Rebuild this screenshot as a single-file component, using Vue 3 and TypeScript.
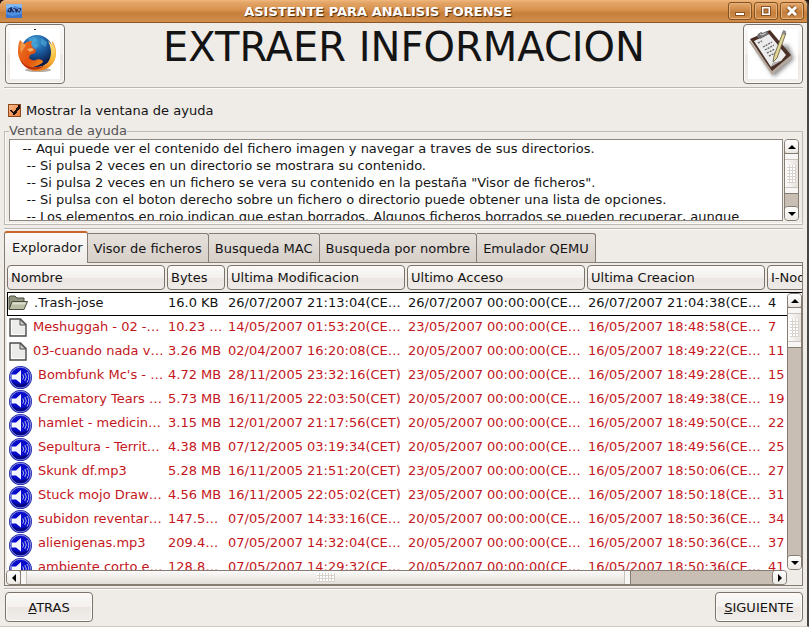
<script setup lang="ts">
import { ref } from 'vue'

type Kind = 'folder' | 'file' | 'audio'
interface Entry {
  kind: Kind
  name: string
  bytes: string
  modified: string
  accessed: string
  created: string
  inode: string
}

const showHelp = ref(true)
const activeTab = ref(0)
const selected = ref(0)

const tabs: string[] = [
  'Explorador',
  'Visor de ficheros',
  'Busqueda MAC',
  'Busqueda por nombre',
  'Emulador QEMU',
]

const columns: string[] = [
  'Nombre',
  'Bytes',
  'Ultima Modificacion',
  'Ultimo Acceso',
  'Ultima Creacion',
  'I-Nodo',
]

const helpText = [
  '   -- Aqui puede ver el contenido del fichero imagen y navegar a traves de sus directorios.',
  '    -- Si pulsa 2 veces en un directorio se mostrara su contenido.',
  '    -- Si pulsa 2 veces en un fichero se vera su contenido en la pestaña "Visor de ficheros".',
  '    -- Si pulsa con el boton derecho sobre un fichero o directorio puede obtener una lista de opciones.',
  '    -- Los elementos en rojo indican que estan borrados. Algunos ficheros borrados se pueden recuperar, aunque',
].join('\n')

function entry(kind: Kind, name: string, bytes: string, modified: string, accessed: string, created: string, inode: string): Entry {
  return { kind, name, bytes, modified, accessed, created, inode }
}

const entries: Entry[] = [
  entry('folder', '.Trash-jose', '16.0 KB', '26/07/2007 21:13:04(CE…', '26/07/2007 00:00:00(CE…', '26/07/2007 21:04:38(CE…', '4'),
  entry('file', 'Meshuggah - 02 -…', '10.23 …', '14/05/2007 01:53:20(CE…', '23/05/2007 00:00:00(CE…', '16/05/2007 18:48:58(CE…', '7'),
  entry('file', '03-cuando nada v…', '3.26 MB', '02/04/2007 16:20:08(CE…', '20/05/2007 00:00:00(CE…', '16/05/2007 18:49:22(CE…', '11'),
  entry('audio', "Bombfunk Mc's - …", '4.72 MB', '28/11/2005 23:32:16(CET)', '23/05/2007 00:00:00(CE…', '16/05/2007 18:49:28(CE…', '15'),
  entry('audio', 'Crematory Tears …', '5.73 MB', '16/11/2005 22:03:50(CET)', '20/05/2007 00:00:00(CE…', '16/05/2007 18:49:38(CE…', '19'),
  entry('audio', 'hamlet - medicin…', '3.15 MB', '12/01/2007 21:17:56(CET)', '20/05/2007 00:00:00(CE…', '16/05/2007 18:49:50(CE…', '22'),
  entry('audio', 'Sepultura - Territ…', '4.38 MB', '07/12/2005 03:19:34(CET)', '20/05/2007 00:00:00(CE…', '16/05/2007 18:49:56(CE…', '25'),
  entry('audio', 'Skunk df.mp3', '5.28 MB', '16/11/2005 21:51:20(CET)', '23/05/2007 00:00:00(CE…', '16/05/2007 18:50:06(CE…', '27'),
  entry('audio', 'Stuck mojo Draw…', '4.56 MB', '16/11/2005 22:05:02(CET)', '23/05/2007 00:00:00(CE…', '16/05/2007 18:50:18(CE…', '31'),
  entry('audio', 'subidon reventar…', '147.5…', '07/05/2007 14:33:16(CE…', '20/05/2007 00:00:00(CE…', '16/05/2007 18:50:36(CE…', '34'),
  entry('audio', 'alienigenas.mp3', '209.4…', '07/05/2007 14:32:04(CE…', '20/05/2007 00:00:00(CE…', '16/05/2007 18:50:36(CE…', '37'),
  entry('audio', 'ambiente corto e…', '128.8…', '07/05/2007 14:29:32(CE…', '20/05/2007 00:00:00(CE…', '16/05/2007 18:50:36(CE…', '41'),
]
</script>

<template>
  <div class="window">
    <header class="titlebar">
      <svg class="app-icon" viewBox="0 0 16 14" aria-hidden="true">
        <rect width="16" height="14" fill="#4f8fe0" />
        <path d="M0 0h16v4L9 2 0 5z" fill="#86b8f0" />
        <path d="M0 10l6 2 10-2v4H0z" fill="#3a74cc" />
        <path d="M1 8l2-4 3-1v3l2-2 3 1 4-1v2l-2 3-1-2-2 2-1-3-2 3-1-2-2 2-1-1z" fill="#1c2f66" />
        <path d="M7 6h2M12 6h2M3 6h1" stroke="#c9def8" />
      </svg>
      <span class="window-title">ASISTENTE PARA ANALISIS FORENSE</span>
      <div class="window-buttons">
        <button type="button" aria-label="Minimizar">
          <svg viewBox="0 0 12 12"><rect x="1" y="7" width="10" height="4" fill="#8a5220" /><rect x="2" y="8" width="8" height="2" fill="#fff" /></svg>
        </button>
        <button type="button" aria-label="Maximizar">
          <svg viewBox="0 0 12 12"><rect x="1" y="1" width="10" height="10" fill="#8a5220" /><rect x="2" y="2" width="8" height="8" fill="#fff" /><rect x="4" y="4" width="4" height="4" fill="#c07c3c" stroke="#8a5220" /></svg>
        </button>
        <button type="button" aria-label="Cerrar">
          <svg viewBox="0 0 12 12"><path d="M2 2l8 8M10 2l-8 8" stroke="#8a5220" stroke-width="5" /><path d="M2 2l8 8M10 2l-8 8" stroke="#fff" stroke-width="3" /></svg>
        </button>
      </div>
    </header>

    <main class="content">
      <div class="banner">
        <button type="button" class="push picture" aria-label="Navegador">
          <svg viewBox="0 0 50 50" aria-hidden="true">
            <defs>
              <radialGradient id="globe" cx="45%" cy="20%" r="75%">
                <stop offset="0" stop-color="#3f9fd8" />
                <stop offset="0.5" stop-color="#1a5a9e" />
                <stop offset="1" stop-color="#0a1845" />
              </radialGradient>
              <linearGradient id="fox" x1="0" y1="0" x2="1" y2="0.5">
                <stop offset="0" stop-color="#ee7a28" />
                <stop offset="0.5" stop-color="#e2500e" />
                <stop offset="1" stop-color="#f5a522" />
              </linearGradient>
              <linearGradient id="tail" x1="0" y1="0" x2="0" y2="1">
                <stop offset="0" stop-color="#fbe58a" />
                <stop offset="0.6" stop-color="#f7bd3a" />
                <stop offset="1" stop-color="#e8701a" />
              </linearGradient>
            </defs>
            <rect width="50" height="50" fill="#fff" />
            <rect x="24" width="2" height="1" fill="#222" />
            <ellipse cx="28" cy="41" rx="13" ry="2" fill="#b5aca6" />
            <circle cx="27" cy="22" r="16" fill="url(#globe)" />
            <path d="M18 9l7-1 2 3-3 3 5 2-3 4-5-3zM31 9l6 4-1 5-5-3z" fill="#52aedb" opacity=".6" />
            <path d="M10 11l4 4c2-2 5-3 8-3l-1 3 2 4 3 2-1 3-5 2-1 3c3 3 6 3 9 1l4 1 1 2c-3 3-7 5-11 4 6 3 14 0 17-5 3-6 3-14-1-20l4 4v-4c4 5 5 12 3 18-3 8-10 12-18 12C17 42 9 34 8 24c0-5 0-9 2-13z" fill="url(#fox)" />
            <path d="M38 12l4 4v-3c5 8 5 16 0 22-4 5-10 7-15 6 9-3 14-9 14-17 0-5-1-8-3-12z" fill="url(#tail)" />
            <path d="M10 30c4 7 10 9 18 8 3 0 5-1 7-2-4 5-13 6-19 2-3-2-5-5-6-8z" fill="#b72e08" />
            <path d="M11 13l5 3-5 8c-1-4-1-8 0-11z" fill="#f59848" />
            <path d="M17 20l5-1 2 2-4 2z" fill="#f7b06a" />
          </svg>
        </button>
        <h1>EXTRAER INFORMACION</h1>
        <button type="button" class="push picture" aria-label="Informe">
          <svg viewBox="0 0 50 50" aria-hidden="true">
            <defs>
              <filter id="soft"><feGaussianBlur stdDeviation="2" /></filter>
            </defs>
            <rect width="50" height="50" fill="#fff" />
            <path d="M8 20l18 28 20-18-6-14z" fill="#8a8a8a" filter="url(#soft)" />
            <path d="M1 13l23 33 20-17v-3L24 41 2 11z" fill="#b5a89c" />
            <path d="M2 10L22 1l21 25-19 16z" fill="#4a3026" />
            <path d="M6 12l15-7 17 21-5 6-8 2-2 4z" fill="#ececec" />
            <path d="M23 38l2-4 8-2z" fill="#b8b8b8" />
            <path d="M10 5l3-2 2 1 4-2 2 3-9 5-3-2z" fill="#6f6f6f" />
            <path d="M12 5l2 1 4-2" fill="none" stroke="#ddd" />
            <path d="M10 14l4-2M15 18l9-5M17 21l9-5M19 24l8-4M21 27l6-3" fill="none" stroke="#6c6c6c" stroke-width="1.4" stroke-dasharray="2 1" />
            <path d="M35 3l3 1-9 25-4 4 1-6z" fill="#e3d896" stroke="#5f543a" stroke-width=".8" />
            <path d="M35 1l3 1-1 4-3-1z" fill="#8a8a86" />
          </svg>
        </button>
      </div>

      <hr />

      <label class="check">
        <input v-model="showHelp" type="checkbox" />
        <span>Mostrar la ventana de ayuda</span>
      </label>

      <fieldset v-show="showHelp" class="help">
        <legend>Ventana de ayuda</legend>
        <div class="help-body">
          <textarea readonly aria-label="Ventana de ayuda" :value="helpText"></textarea>
          <div class="scroll vertical">
            <button type="button" aria-label="Subir ayuda"><svg viewBox="0 0 8 8"><path d="M4 2l4 4H0z" /></svg></button>
            <div class="thumb short"><i class="grip"></i></div>
            <div class="trough"></div>
            <button type="button" aria-label="Bajar ayuda"><svg viewBox="0 0 8 8"><path d="M0 2h8L4 6z" /></svg></button>
          </div>
        </div>
      </fieldset>

      <hr />

      <div class="tabs" role="tablist">
        <button
          v-for="(tab, i) in tabs"
          :key="tab"
          type="button"
          role="tab"
          :aria-selected="activeTab === i"
          :class="{ active: activeTab === i }"
          @click="activeTab = i"
        >{{ tab }}</button>
      </div>

      <section class="explorer">
        <div class="listing">
          <table>
            <colgroup>
              <col class="c-name" /><col class="c-bytes" /><col class="c-date" /><col class="c-date" /><col class="c-date" /><col class="c-node" />
            </colgroup>
            <thead>
              <tr>
                <th v-for="column in columns" :key="column" scope="col"><span>{{ column }}</span></th>
              </tr>
            </thead>
            <tbody>
              <tr
                v-for="(row, i) in entries"
                :key="row.name"
                :class="{ deleted: row.kind !== 'folder', selected: selected === i }"
                @click="selected = i"
              >
                <td>
                  <div class="name" :class="row.kind">
                    <svg v-if="row.kind === 'folder'" viewBox="0 0 20 16" aria-hidden="true">
                      <path d="M1 14V2l1-1h5l2 2h7v4" fill="#8f937c" stroke="#4a4d3e" />
                      <path d="M1 14.500L4 6.500h15.500L16 14.500z" fill="#b9bda4" stroke="#4a4d3e" />
                      <path d="M4.700 7.500H18l-1 2H4z" fill="#dcdfcc" />
                    </svg>
                    <svg v-else-if="row.kind === 'file'" viewBox="0 0 18 19" aria-hidden="true">
                      <path d="M1 1h10.500L17 6.500V18H1z" fill="#ececea" stroke="#4c4c4a" stroke-width="1.400" />
                      <path d="M2.500 16.500V2.500M2.500 16.500h13" stroke="#fff" />
                      <path d="M11 1.500V7h5.500z" fill="#d4d4d0" stroke="#4c4c4a" />
                    </svg>
                    <svg v-else viewBox="0 0 23 23" aria-hidden="true">
                      <circle cx="11.500" cy="11.500" r="11.500" fill="#1a22a8" />
                      <circle cx="11.500" cy="11.500" r="10.300" fill="#0a0ccb" stroke="#a9b2ee" stroke-width=".8" />
                      <path d="M3 16a9.500 9.500 0 0 0 17 0q-8 4-17 0z" fill="#050788" />
                      <path d="M2.500 8.500H7l5-4.500v13.500l-5-4H2.500z" fill="#f4f6ff" />
                      <path d="M13.700 8.500q1.800 2.500 0 5M15.800 7q3 4 0 8M18 6q3.500 5 0 10.500" fill="none" stroke="#aab4f2" stroke-width="1" />
                    </svg>
                    <span>{{ row.name }}</span>
                  </div>
                </td>
                <td>{{ row.bytes }}</td>
                <td>{{ row.modified }}</td>
                <td>{{ row.accessed }}</td>
                <td>{{ row.created }}</td>
                <td>{{ row.inode }}</td>
              </tr>
            </tbody>
          </table>
        </div>
        <div class="scroll vertical list-v">
          <button type="button" aria-label="Subir"><svg viewBox="0 0 8 8"><path d="M4 2l4 4H0z" /></svg></button>
          <div class="thumb short"><i class="grip"></i></div>
          <div class="trough"></div>
          <button type="button" aria-label="Bajar"><svg viewBox="0 0 8 8"><path d="M0 2h8L4 6z" /></svg></button>
        </div>
        <div class="scroll horizontal list-h">
          <button type="button" aria-label="Izquierda"><svg viewBox="0 0 8 8"><path d="M6 0v8L2 4z" /></svg></button>
          <div class="thumb long"><i class="grip"></i></div>
          <div class="trough"></div>
          <button type="button" aria-label="Derecha"><svg viewBox="0 0 8 8"><path d="M2 0l4 4-4 4z" /></svg></button>
        </div>
      </section>

      <hr />

      <footer class="actions">
        <button type="button" class="push"><span><u>A</u>TRAS</span></button>
        <button type="button" class="push"><span><u>S</u>IGUIENTE</span></button>
      </footer>
    </main>
  </div>
</template>

<style>
body {
  margin: 0;
  background: #2a1410;
}
</style>

<style scoped>
.window {
  display: flex;
  flex-direction: column;
  box-sizing: border-box;
  height: 100vh;
  min-height: 480px;
  background: #efebe7;
  border-right: 2px solid #4a4541;
  border-bottom: 1px solid #d3c8bd;
  border-radius: 6px 6px 0 0;
  overflow: hidden;
  font: 13px/17px "DejaVu Sans", Verdana, sans-serif;
  color: #141414;
}
button {
  margin: 0;
  padding: 0;
  font: inherit;
  color: inherit;
}
svg {
  display: block;
  flex: none;
}
hr {
  flex: none;
  margin: 0;
  border: 0;
  height: 1px;
  background: #bab5b0;
  border-bottom: 1px solid #fbfaf9;
}

.titlebar {
  display: flex;
  align-items: center;
  flex: none;
  box-sizing: border-box;
  height: 23px;
  padding: 0 3px 0 6px;
  background: linear-gradient(#f0b67c 0, #e2a465 3px, #d8924e 10px, #c77f3a 13px, #d08c4a 21px);
  border-bottom: 1px solid #8a5626;
}
.app-icon {
  width: 16px;
  height: 14px;
}
.window-title {
  flex: 1;
  padding-left: 6px;
  text-align: center;
  font-weight: bold;
  color: #fff;
  text-shadow: 1px 1px 1px #4b2c10;
}
.window-buttons {
  display: flex;
  gap: 2px;
}
.window-buttons button {
  display: grid;
  place-items: center;
  box-sizing: border-box;
  width: 24px;
  height: 18px;
  border: 1px solid #83501f;
  border-radius: 3px;
  background: linear-gradient(#e4a86c, #c57f3d 60%, #cf8c4b);
  box-shadow: inset 0 0 0 1px #e6b27c;
}
.window-buttons svg {
  width: 12px;
  height: 12px;
}

.content {
  display: flex;
  flex-direction: column;
  flex: 1;
  min-height: 0;
  padding: 1px 4px 4px;
}
.banner {
  display: flex;
  justify-content: space-between;
  padding: 0 0 3px 1px;
}
.banner h1 {
  margin: 0;
  font-weight: normal;
  font-size: 40px;
  line-height: 46px;
}
.push {
  box-sizing: border-box;
  border: 1px solid #7b736b;
  border-radius: 4px;
  background: linear-gradient(#fbfaf9, #f3f0ed 50%, #ebe6e2 52%, #f0edea);
  box-shadow: inset 0 0 0 1px #fcfbfa;
}
.picture {
  display: grid;
  place-items: center;
  width: 60px;
  height: 60px;
}
.picture svg {
  width: 50px;
  height: 50px;
}

.check {
  display: flex;
  align-items: center;
  gap: 5px;
  padding: 13px 4px 4px;
}
.check input {
  appearance: none;
  width: 13px;
  height: 13px;
  margin: 0;
  border: 1px solid #8a4a1e;
  background: linear-gradient(135deg, #f9b585, #e8803c);
}
.check input:checked {
  background:
    linear-gradient(50deg, transparent 46%, #1b1008 46% 62%, transparent 62%) 1px 5px / 5px 5px no-repeat,
    linear-gradient(125deg, transparent 38%, #1b1008 38% 60%, transparent 60%) 4px 0 / 8px 10px no-repeat,
    linear-gradient(135deg, #f9b585, #e8803c);
}

.help {
  min-width: 0;
  margin: 0;
  padding: 0 3px 3px 4px;
  border: 1px solid #bfbab5;
  box-shadow: inset 1px -1px #fbfaf9;
}
.help legend {
  margin: 0;
  padding: 0;
  line-height: 16px;
  color: #555;
}
.help-body {
  display: flex;
  gap: 1px;
  height: 82px;
}
.help textarea {
  flex: 1;
  box-sizing: border-box;
  min-width: 0;
  margin: 0;
  padding: 0;
  border: 1px solid #8e867e;
  border-radius: 0;
  background: #fff;
  resize: none;
  overflow: hidden;
  font: inherit;
  color: inherit;
  outline: none;
}
.help + hr {
  margin-top: 3px;
}

.scroll {
  display: flex;
  box-sizing: border-box;
  border: 1px solid #857c74;
  background: #c9beb4;
}
.vertical {
  flex-direction: column;
  width: 15px;
  border-radius: 4px;
}
.horizontal {
  height: 15px;
  border-radius: 4px;
}
.scroll button {
  display: grid;
  place-items: center;
  flex: none;
  box-sizing: border-box;
  width: 13px;
  height: 13px;
  border: 0;
  border-radius: 3px;
  background: linear-gradient(#fff, #ece8e4);
}
.scroll button svg {
  width: 8px;
  height: 8px;
}
.thumb {
  display: grid;
  place-items: center;
  box-sizing: border-box;
  border: 0 solid #857c74;
}
.vertical .thumb {
  border-width: 1px 0;
  background: linear-gradient(90deg, #fcfbfa, #e6e1dc);
  box-shadow: inset 0 5px #f8f6f4, inset 0 6px #c9c3bd, inset 0 -5px #f8f6f4, inset 0 -6px #c9c3bd;
}
.horizontal .thumb {
  border-width: 0 1px;
  background: linear-gradient(#fcfbfa, #e2ddd8);
  box-shadow: inset 5px 0 #f8f6f4, inset 6px 0 #c9c3bd, inset -5px 0 #f8f6f4, inset -6px 0 #c9c3bd;
}
.short {
  height: 41px;
}
.long {
  flex: 611;
}
.trough {
  flex: 1;
}
.horizontal .trough {
  flex: 142;
}
.horizontal button:last-child {
  box-shadow: -1px 0 #857c74;
}
.vertical button:last-child {
  box-shadow: 0 -1px #857c74;
}
.grip {
  width: 9px;
  height: 18px;
  background: radial-gradient(circle at 1px 1px, #fff 1px, transparent 1px) 0 0 / 3px 3px, #d8d2cc;
}
.horizontal .grip {
  width: 18px;
  height: 9px;
}

.tabs {
  display: flex;
  align-items: flex-end;
  height: 31px;
  margin-top: 1px;
}
.tabs button {
  box-sizing: border-box;
  height: 29px;
  padding: 0 6px;
  border: 1px solid #857c74;
  border-left-width: 0;
  border-bottom: 0;
  border-radius: 0 3px 0 0;
  background: linear-gradient(#e6e1dc, #d6cfc8);
}
.tabs button.active {
  z-index: 1;
  height: 32px;
  margin-bottom: -1px;
  padding: 0 4px 1px 7px;
  border-left-width: 1px;
  border-top: 2px solid #c8662a;
  border-radius: 3px 3px 0 0;
  background: linear-gradient(#fbfaf9, #efebe7);
}

.explorer {
  display: grid;
  grid-template-columns: minmax(0, 1fr) 15px;
  grid-template-rows: 29px minmax(0, 1fr) 15px;
  flex: 1;
  min-height: 0;
  margin-bottom: 2px;
  padding: 1px 0 0 1px;
  border: 1px solid #857c74;
}
.listing {
  grid-area: 1 / 1 / 3 / 3;
  overflow: hidden;
  background: linear-gradient(#efebe7 28px, #fff 28px);
  margin-left: 1px;
}
.list-v {
  grid-area: 2 / 2;
}
.list-h {
  grid-area: 3 / 1;
}
table {
  table-layout: fixed;
  width: 820px;
  min-width: 100%;
  border-collapse: separate;
  border-spacing: 0;
}
.c-name {
  width: 160px;
}
.c-bytes {
  width: 60px;
}
.c-date {
  width: 180px;
}
th {
  padding: 1px 2px 2px 0;
  font-weight: normal;
  text-align: left;
}
th span {
  display: block;
  box-sizing: border-box;
  height: 25px;
  padding-left: 3px;
  border: 1px solid #7b736b;
  border-radius: 4px;
  line-height: 23px;
  background: linear-gradient(#fbfaf9, #f3f0ed 50%, #eae5e1 52%, #efebe8);
  white-space: nowrap;
}
td {
  box-sizing: border-box;
  height: 24px;
  padding: 0 0 3px 1px;
  line-height: 21px;
  white-space: nowrap;
}
.deleted {
  color: #c4161c;
}
.selected {
  outline: 1px solid #000;
  outline-offset: -1px;
}
.name {
  display: flex;
  height: 21px;
}
.folder svg {
  width: 20px;
  height: 16px;
  margin: 3px 6px 0 0;
}
.file svg {
  width: 18px;
  height: 19px;
  margin: 2px 6px 0 1px;
}
.audio svg {
  width: 23px;
  height: 23px;
  margin: 2px 6px 0 1px;
}

.actions {
  display: flex;
  justify-content: space-between;
  padding: 2px 0 0 1px;
}
.actions .push {
  width: 88px;
  height: 30px;
}
</style>
